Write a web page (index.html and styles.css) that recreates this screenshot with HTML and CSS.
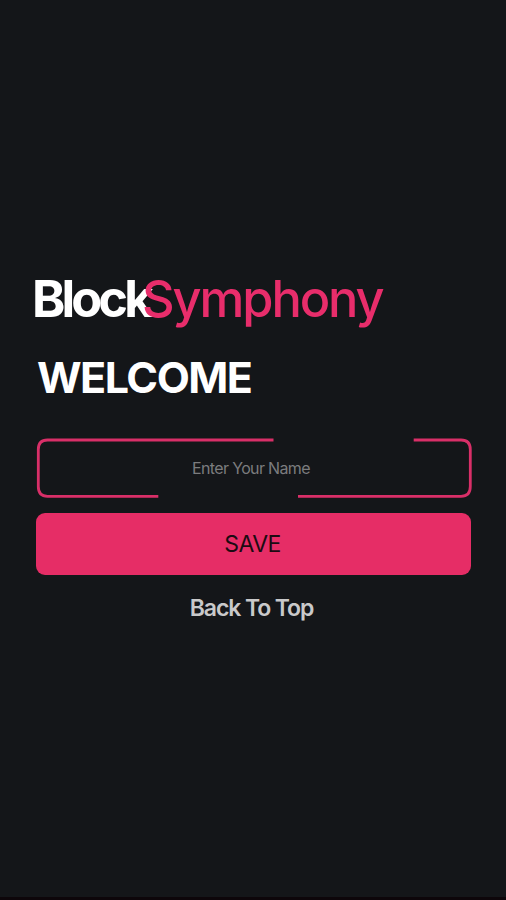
FILE: index.html
```
<!DOCTYPE html>
<html lang="en">
<head>
    <meta charset="UTF-8">
    <meta name="viewport" content="width=device-width, initial-scale=1.0">
    <title>BlockSymphony</title>
    <link rel="stylesheet" href="styles.css">
</head>
<body>
    <main class="container">
        <h1 class="logo"><span class="logo-block">Block</span><span class="logo-symphony">Symphony</span></h1>
        <h2 class="welcome">WELCOME</h2>
        <form class="name-form">
            <div class="input-box">
                <svg class="input-border" viewBox="0 0 436 60" aria-hidden="true">
                    <path d="M237.500 2H11.500Q2.300 2 2.300 11.500V48.500Q2.300 58.300 11.500 58.300H122.300"/>
                    <path d="M377.700 2H425Q434.300 2 434.300 11.500V48.500Q434.300 58.300 425 58.300H262"/>
                </svg>
                <input class="name-input" type="text" placeholder="Enter Your Name">
            </div>
            <button class="save-button" type="button">SAVE</button>
        </form>
        <a class="back-link" href="#">Back To Top</a>
    </main>
</body>
</html>
```
FILE: styles.css
```
body {
    margin: 0;
    height: 900px;
    box-sizing: border-box;
    background-color: #141619;
    border-bottom: 3px solid #0d060a;
    font-family: Inter, "Liberation Sans", sans-serif;
    overflow: hidden;
}

.container {
    display: flex;
    flex-direction: column;
    width: 435px;
    margin-left: 36px;
    padding-top: 268px;
}

.logo {
    margin: 0;
    font-size: 50.5px;
    line-height: 62px;
    white-space: nowrap;
}

.logo-block {
    color: #ffffff;
    font-weight: 700;
    letter-spacing: -3.9px;
    margin-left: -4px;
}

.logo-symphony {
    color: #e82d6b;
    font-weight: 500;
    letter-spacing: -2.1px;
    margin-left: -7.5px;
}

.welcome {
    margin: 21px 0 0 1px;
    color: #ffffff;
    font-size: 43px;
    font-weight: 700;
    line-height: 52px;
    letter-spacing: -1.5px;
}

.name-form {
    display: flex;
    flex-direction: column;
    gap: 15px;
    margin-top: 35px;
}

.input-box {
    display: grid;
    height: 60px;
}

/* outline with open gaps on the top and bottom edges */
.input-border {
    grid-area: 1 / 1;
    width: 436px;
    height: 60px;
    fill: none;
    stroke: #d92f68;
    stroke-width: 2.8;
}

.name-input {
    grid-area: 1 / 1;
    padding: 0 6px 0 0;
    border: none;
    outline: none;
    background: transparent;
    color: #ffffff;
    font-family: inherit;
    font-size: 16px;
    letter-spacing: -0.65px;
    text-align: center;
}

.name-input::placeholder {
    color: #7b7c7e;
}

.save-button {
    height: 62px;
    padding: 0 2px 0 0;
    border: none;
    border-radius: 9px;
    background-color: #e62d66;
    color: #1b0b12;
    font-family: inherit;
    font-size: 23px;
    letter-spacing: -0.5px;
}

.back-link {
    align-self: center;
    margin-top: 19px;
    padding-right: 4px;
    color: #c9c9ca;
    font-size: 23px;
    font-weight: 600;
    line-height: 28px;
    letter-spacing: -1.1px;
    text-decoration: none;
}
```
